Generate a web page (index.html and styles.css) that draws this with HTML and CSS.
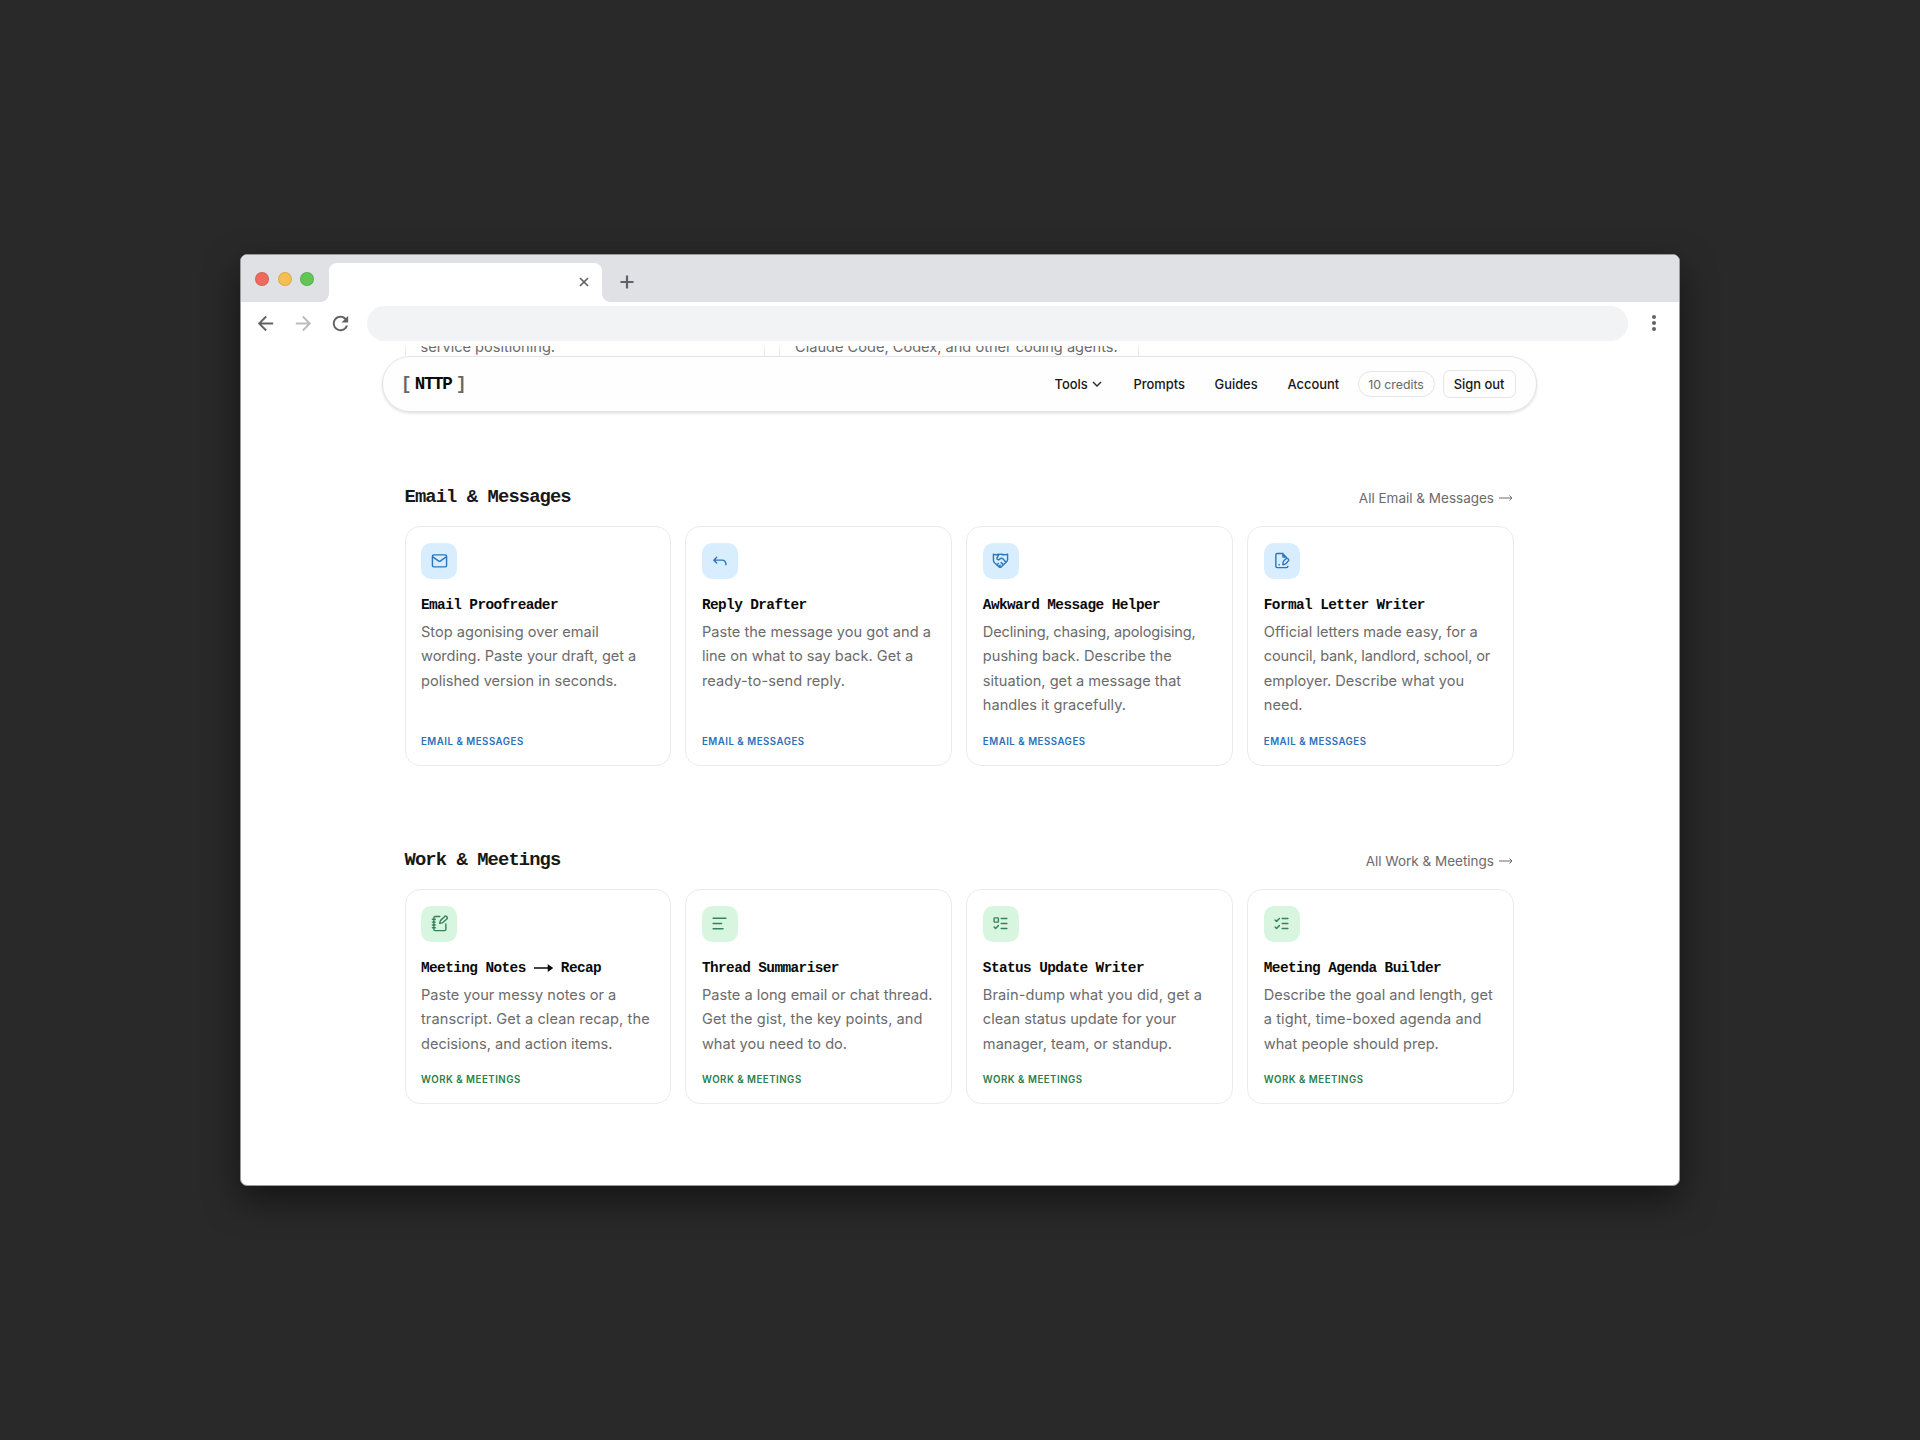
FILE: index.html
```html
<!DOCTYPE html>
<html lang="en">
<head>
<meta charset="utf-8">
<title>NTTP</title>
<link rel="stylesheet" href="styles.css">
</head>
<body>
<div class="window">
  <div class="tabstrip">
    <div class="lights"><span class="light close"></span><span class="light minimise"></span><span class="light zoom"></span></div>
    <div class="tab"><svg class="tab-close" viewBox="0 0 10 10"><path d="M1 1l8 8M9 1l-8 8"/></svg></div>
    <svg class="tab-new" viewBox="0 0 14 14"><path d="M7 .5v13M.5 7h13"/></svg>
  </div>
  <div class="toolbar">
    <svg class="tool" viewBox="0 0 24 24"><path d="M20 11H7.83l5.59-5.59L12 4l-8 8 8 8 1.41-1.41L7.83 13H20v-2z"/></svg>
    <svg class="tool dim" viewBox="0 0 24 24"><path d="M12 4l-1.41 1.41L16.17 11H4v2h12.17l-5.58 5.59L12 20l8-8z"/></svg>
    <svg class="tool" viewBox="0 0 24 24"><path d="M17.65 6.35C16.2 4.9 14.21 4 12 4c-4.42 0-7.99 3.58-7.99 8s3.57 8 7.99 8c3.73 0 6.84-2.55 7.73-6h-2.08c-.82 2.33-3.04 4-5.65 4-3.31 0-6-2.69-6-6s2.69-6 6-6c1.66 0 3.14.69 4.22 1.78L13 11h7V4l-2.35 2.35z"/></svg>
    <div class="address"></div>
    <div class="menu"><i></i><i></i><i></i></div>
  </div>
  <div class="page">
    <div class="peek">
      <div class="peek-card"><span>service positioning.</span></div>
      <div class="peek-card"><span>Claude Code, Codex, and other coding agents.</span></div>
    </div>
    <header class="nav">
      <div class="logo"><span class="br">[</span><b>NTTP</b><span class="br">]</span></div>
      <nav class="links">
        <a class="l-tools">Tools <svg viewBox="0 0 10 6"><path d="M1 1l4 4 4-4"/></svg></a>
        <a class="l-prompts">Prompts</a>
        <a class="l-guides">Guides</a>
        <a class="l-account">Account</a>
      </nav>
      <span class="credits">10 credits</span>
      <a class="signout">Sign out</a>
    </header>

    <section class="section email">
      <div class="head"><h2>Email &amp; Messages</h2><a>All Email &amp; Messages <svg class="arr" viewBox="0 0 14 8"><path d="M0 4h13M10.500 1.500L13 4l-2.500 2.500"/></svg></a></div>
      <div class="grid">
        <article class="card">
          <div class="tile"><svg viewBox="0 0 24 24"><rect x="2" y="4" width="20" height="17" rx="2"/><path d="M2.500 7l8 5.500a2.500 2.500 0 0 0 3 0l8-5.500"/></svg></div>
          <h3>Email Proofreader</h3>
          <p>Stop agonising over email<br><span class="snug">wording. Paste your draft, get a</span><br>polished version in seconds.</p>
          <span class="tag">EMAIL &amp; MESSAGES</span>
        </article>
        <article class="card">
          <div class="tile"><svg viewBox="0 0 24 24"><path d="M8 7.500L4 11.500l4 4M4.500 11.500h11.500a5 5 0 0 1 5 5v1.500"/></svg></div>
          <h3>Reply Drafter</h3>
          <p>Paste the message you got and a<br>line on what to say back. Get a<br><span class="loose">ready-to-send reply.</span></p>
          <span class="tag">EMAIL &amp; MESSAGES</span>
        </article>
        <article class="card">
          <div class="tile"><svg viewBox="0 0 24 24"><path d="M2 3c2.500 1.200 5 1.200 7.500.2M22 3c-3.500 1.400-6.500 1-9 .2-1.500-.4-2.700 0-3.700 1L7.500 7.500a2 2 0 0 0 2.800 2.900L12.500 9c1.500-.3 2.500.2 3.500 1.200l3.500 4M2 3v9c0 1.500 1 2.500 2 3.500l6 5.500c1 .8 2.400.8 3.200-.2l6.300-6c1.500-1.300 2.500-2 2.500-3.800V3M13 15l3 3M10 21l1.500-2.500M7 18.500l2-2.500"/></svg></div>
          <h3>Awkward Message Helper</h3>
          <p><span class="tight">Declining, chasing, apologising,</span><br>pushing back. Describe the<br>situation, get a message that<br>handles it gracefully.</p>
          <span class="tag">EMAIL &amp; MESSAGES</span>
        </article>
        <article class="card">
          <div class="tile"><svg viewBox="0 0 24 24"><path d="M18.500 7.500V7l-5-5H6a2 2 0 0 0-2 2v16a2 2 0 0 0 2 2h13a2 2 0 0 0 2-2M14 2v5h4M14 18c-.3-3 .2-4.500 1.700-6l2.300-2.200a2.300 2.300 0 0 1 3.700 2.700l-3 3.500c-1.200 1.300-2.500 2-4.700 2zM8.500 18h.5"/></svg></div>
          <h3>Formal Letter Writer</h3>
          <p>Official letters made easy, for a<br><span class="tight">council, bank, landlord, school, or</span><br>employer. Describe what you<br>need.</p>
          <span class="tag">EMAIL &amp; MESSAGES</span>
        </article>
      </div>
    </section>

    <section class="section work">
      <div class="head"><h2>Work &amp; Meetings</h2><a>All Work &amp; Meetings <svg class="arr" viewBox="0 0 14 8"><path d="M0 4h13M10.500 1.500L13 4l-2.500 2.500"/></svg></a></div>
      <div class="grid">
        <article class="card">
          <div class="tile"><svg viewBox="0 0 24 24"><path d="M12.500 2H6a2 2 0 0 0-2 2v16a2 2 0 0 0 2 2h13a2 2 0 0 0 2-2v-7.500M2 6h4M2 10h4M2 14h4M2 18h4M22.300 5.600a2 2 0 0 0-3.300-3.200l-5.400 5.200a2 2 0 0 0-.5.900l-.8 3.300 3.700-.7a2 2 0 0 0 .8-.5z"/></svg></div>
          <h3>Meeting Notes <svg class="longarr" viewBox="0 0 20 10"><path d="M0 5h17M14.500 2.500l3.500 2.500-3.500 2.500z"/></svg> Recap</h3>
          <p>Paste your messy notes or a<br><span class="loose">transcript. Get a clean recap, the</span><br>decisions, and action items.</p>
          <span class="tag">WORK &amp; MEETINGS</span>
        </article>
        <article class="card">
          <div class="tile"><svg viewBox="0 0 24 24"><path d="M3 4.500h18M3 12h12M3 19.500h14"/></svg></div>
          <h3>Thread Summariser</h3>
          <p>Paste a long email or chat thread.<br><span class="loose">Get the gist, the key points, and</span><br>what you need to do.</p>
          <span class="tag">WORK &amp; MEETINGS</span>
        </article>
        <article class="card">
          <div class="tile"><svg viewBox="0 0 24 24"><rect x="3" y="4" width="6" height="6" rx="1"/><path d="M3 17l2 2 4-4M13 5h8M13 12h8M13 19h8"/></svg></div>
          <h3>Status Update Writer</h3>
          <p><span class="loose">Brain-dump what you did, get a</span><br>clean status update for your<br>manager, team, or standup.</p>
          <span class="tag">WORK &amp; MEETINGS</span>
        </article>
        <article class="card">
          <div class="tile"><svg viewBox="0 0 24 24"><path d="M3 17l2 2 4-4M3 7l2 2 4-4M13 5h8M13 12h8M13 19h8"/></svg></div>
          <h3>Meeting Agenda Builder</h3>
          <p>Describe the goal and length, get<br><span class="loose">a tight, time-boxed agenda and</span><br>what people should prep.</p>
          <span class="tag">WORK &amp; MEETINGS</span>
        </article>
      </div>
    </section>
  </div>
</div>
</body>
</html>
```
FILE: styles.css
```css
* { box-sizing: border-box; }
body {
  margin: 0;
  height: 1440px;
  overflow: hidden;
  background: #292929;
  display: flex;
  justify-content: center;
  align-items: center;
  font-family: Inter, "Liberation Sans", sans-serif;
  color: #171717;
}
svg { fill: none; display: block; flex: none; }
.window {
  width: 1440px;
  height: 932px;
  border: 1px solid #9a9a9a;
  border-radius: 7px;
  background: #fff;
  overflow: hidden;
  box-shadow: 0 14px 34px rgba(0, 0, 0, .5);
}
.tabstrip {
  height: 47px;
  background: #dfe1e5;
  display: flex;
  padding: 8px 0 0 14px;
}
.lights { display: flex; gap: 8.600px; padding-top: 9px; width: 74px; }
.light { width: 14px; height: 14px; border-radius: 50%; border: 1px solid rgba(0, 0, 0, .1); }
.light.close { background: #ee6a5f; }
.light.minimise { background: #f5bf50; }
.light.zoom { background: #62c654; }
.tab {
  position: relative;
  width: 273px;
  height: 39px;
  background: #fff;
  border-radius: 8px 8px 0 0;
  padding: 14px 13px 0 0;
  display: flex;
  justify-content: flex-end;
}
.tab::before, .tab::after {
  content: "";
  position: absolute;
  bottom: 0;
  width: 8px;
  height: 8px;
}
.tab::before { left: -8px; background: radial-gradient(circle at 0 0, transparent 7.500px, #fff 8px); }
.tab::after { right: -8px; background: radial-gradient(circle at 100% 0, transparent 7.500px, #fff 8px); }
.tab-close { width: 10px; height: 10px; stroke: #5f6368; stroke-width: 1.700; }
.tab-new { width: 14px; height: 14px; stroke: #5f6368; stroke-width: 2.200; margin: 12px 0 0 18px; }
.toolbar { height: 44px; display: flex; align-items: center; padding: 0 20px 2px 13px; }
.tool { width: 23px; height: 23px; fill: #5f6368; margin-right: 14.500px; }
.tool.dim { fill: #babcbe; }
.address { width: 1261px; height: 35px; border-radius: 18px; background: #f1f3f4; }
.menu { display: flex; flex-direction: column; gap: 2px; margin-left: 24px; }
.menu i { width: 4px; height: 4px; border-radius: 50%; background: #5f6368; }

.page { height: 839px; overflow: hidden; display: flex; flex-direction: column; align-items: center; padding-right: 2px; }
.peek { display: flex; gap: 14.500px; width: 1109px; height: 10px; overflow: hidden; }
.peek-card {
  width: 360px;
  height: 10px;
  border: solid #ededed;
  border-width: 0 1px;
  padding-left: 15px;
  font-size: 14.600px;
  line-height: 24px;
  color: #6b6b6b;
  white-space: nowrap;
}
.peek-card span { display: block; margin-top: -11px; }
.nav {
  width: 1155px;
  height: 56px;
  flex: none;
  border: 1px solid #e4e4e4;
  border-radius: 28px;
  background: #fefefe;
  box-shadow: 0 1.500px 3px rgba(0, 0, 0, .12);
  display: flex;
  align-items: center;
  padding: 0 20px 0 18.500px;
  font-size: 12.900px;
  font-weight: 500;
}
.logo { display: flex; gap: 4.500px; font-family: "Liberation Mono", monospace; font-size: 17.500px; letter-spacing: -1.300px; color: #0a0a0a; }
.logo .br { color: #666; font-weight: 700; }
.links { display: flex; margin-left: auto; }
.links a { display: flex; align-items: center; }
.links svg { width: 10px; height: 6px; stroke: #333; stroke-width: 1.500; margin-left: 4px; }
.l-tools { width: 79px; }
.l-prompts { width: 81px; }
.l-guides { width: 73px; }
.l-account { width: 70px; }
.credits {
  width: 77px; height: 26px; border: 1px solid #e5e5e5; border-radius: 13px;
  display: grid; place-items: center; color: #666; font-size: 12.300px; font-weight: 400; margin-right: 8px; white-space: nowrap;
}
.signout {
  width: 73px; height: 28px; border: 1px solid #e5e5e5; border-radius: 7px;
  display: grid; place-items: center; white-space: nowrap;
}

.section { width: 1109px; flex: none; }
.section.email { margin-top: 71px; }
.section.work { margin-top: 80px; }
.head { height: 42.500px; display: flex; justify-content: space-between; align-items: flex-start; }
.head h2 { margin: 1.500px 0 0; font: 700 18.800px/24px "Liberation Mono", monospace; letter-spacing: -.880px; color: #171717; }
.head a { display: flex; align-items: center; font-size: 13.500px; line-height: 24px; margin: 3px 1px 0 0; color: #6b6b6b; white-space: nowrap; }
.arr { width: 14px; height: 8px; stroke: #6b6b6b; stroke-width: 1; margin-left: 4.500px; }
.grid { display: grid; grid-template-columns: repeat(4, minmax(0, 1fr)); gap: 14.700px; }
.card {
  border: 1px solid #ebebeb;
  border-radius: 15px;
  padding: 16px 0 15px 15.500px;
  display: flex;
  flex-direction: column;
  align-items: flex-start;
}
.email .card { height: 240.500px; }
.work .card { height: 215px; }
.tile { width: 36px; height: 36px; border-radius: 10px; display: grid; place-items: center; flex: none; padding-bottom: 1px; }
.tile svg { width: 17px; height: 17px; stroke-width: 2; stroke-linecap: round; stroke-linejoin: round; }
.email .tile { background: #d8eeff; }
.email .tile svg { stroke: #2b76bd; }
.work .tile { background: #d8f5df; }
.work .tile svg { stroke: #35835a; }
.card h3 { display: flex; white-space: pre; margin: 16.500px 0 0; font: 700 14.400px/20px "Liberation Mono", monospace; letter-spacing: -.580px; color: #0a0a0a; }
.longarr { width: 20px; height: 10px; margin-right: -1px; stroke: #0a0a0a; fill: #0a0a0a; stroke-width: 1.500; align-self: center; }
.card p { margin: 5px 0 0; font-size: 14.600px; line-height: 24.300px; color: #6b6b6b; white-space: nowrap; }
.snug { letter-spacing: -.040px; }
.tight { letter-spacing: -.180px; }
.loose { letter-spacing: .080px; }
.tag { margin-top: auto; font-size: 9.700px; line-height: 16px; font-weight: 600; letter-spacing: .500px; white-space: nowrap; }
.email .tag { color: #2b70b8; }
.work .tag { color: #2a8049; }
```
